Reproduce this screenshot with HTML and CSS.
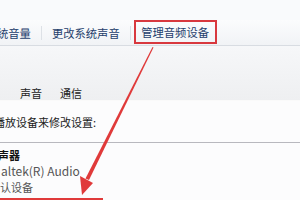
FILE: index.html
```html
<!DOCTYPE html>
<html lang="zh-CN">
<head>
<meta charset="utf-8">
<link rel="stylesheet" href="styles.css">
</head>
<body>
<div class="page">
  <div class="top"></div>
  <div class="toolbar">
    <span class="tb-item first">统音量</span>
    <span class="sep"></span>
    <span class="tb-item">更改系统声音</span>
    <span class="sep"></span>
    <span class="tb-item boxed">管理音频设备</span>
  </div>
  <div class="dialog">
    <div class="tabstrip">
      <span class="tab">声音</span>
      <span class="tab">通信</span>
    </div>
    <div class="panel">
      <div class="hint">播放设备来修改设置:</div>
      <div class="device">
        <div class="dev-name">声器</div>
        <div class="dev-sub driver">altek(R) Audio</div>
        <div class="dev-sub">认设备</div>
      </div>
    </div>
  </div>
  <div class="mark-line"></div>
  <svg class="arrow" width="300" height="200" viewBox="0 0 300 200">
    <polygon points="152.5,47 153.5,47.5 89,180 85.5,178.5" fill="#e03a3a"/>
    <polygon points="80,176 93,183 82,195" fill="#e03a3a"/>
  </svg>
</div>
</body>
</html>
```

FILE: styles.css
```css
html, body {
  margin: 0;
  padding: 0;
}
body {
  width: 300px;
  height: 200px;
  overflow: hidden;
  background: #fbfcfd;
  font-family: "Noto Sans CJK SC", "Noto Sans", sans-serif;
}
.page {
  position: relative;
  width: 300px;
  height: 200px;
  overflow: hidden;
}
.top {
  height: 20px;
  background: #f9fafc;
}
.toolbar {
  height: 25px;
  display: flex;
  align-items: center;
  background: linear-gradient(#fbfcfd, #f1f3f6);
  border-bottom: 1px solid #d8dce2;
  color: #1e3e6c;
  font-size: 11.3px;
  white-space: nowrap;
}
.tb-item {
  line-height: 14px;
}
.tb-item.first {
  margin-left: -3px;
}
.sep {
  width: 1px;
  height: 14px;
  background: #dde1e6;
  margin: 0 10px;
}
.tb-item.boxed {
  margin-left: -7px;
  padding: 3px 5.5px;
  border: 2px solid #d8383e;
  margin-top: -1px;
}
.dialog {
  height: 154px;
  display: flex;
  flex-direction: column;
}
.tabstrip {
  height: 54px;
  display: flex;
  align-items: flex-end;
  padding-left: 20px;
  gap: 18px;
  background: linear-gradient(#f6f7f9, #eeeff1);
  border-bottom: 1px solid #fafafa;
  font-size: 11px;
  color: #222;
}
.tab {
  line-height: 14px;
  padding-bottom: 0;
}
.panel {
  flex: 1;
  background: #fcfcfd;
  font-size: 11px;
  color: #1a1a1a;
  padding-top: 14px;
}
.hint {
  margin-left: -6px;
  line-height: 14px;
  white-space: nowrap;
}
.device {
  margin-top: 13px;
  border-top: 1px solid #b8b8be;
  padding-top: 5px;
}
.dev-name {
  font-weight: bold;
  line-height: 15px;
  margin-left: -2px;
  color: #111;
}
.dev-sub {
  line-height: 16px;
  color: #555;
}
.dev-sub.driver {
  margin-left: 1px;
  font-size: 12px;
}
.mark-line {
  position: absolute;
  left: 0;
  top: 198px;
  width: 103px;
  height: 2px;
  background: #e03a3a;
}
.arrow {
  position: absolute;
  left: 0;
  top: 0;
}
```
